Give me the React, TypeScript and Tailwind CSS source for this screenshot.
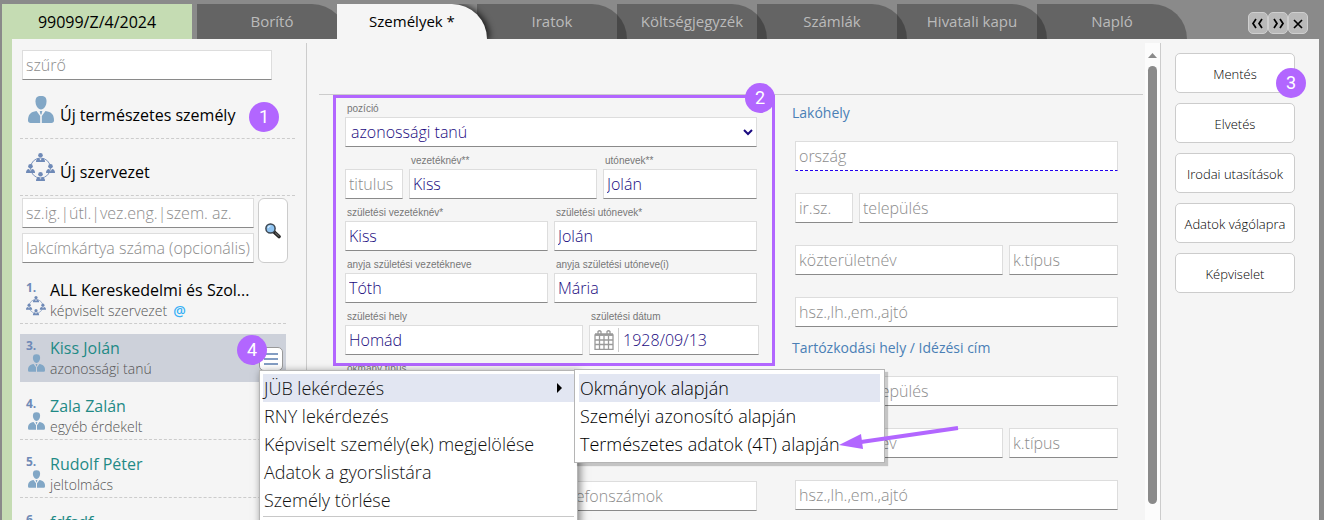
import type { ReactNode } from "react";

type Person = {
  no: string;
  name: string;
  role: string;
  kind: "person" | "org";
  own?: boolean;
  mail?: boolean;
  selected?: boolean;
};

type FieldProps = {
  id: string;
  label?: string;
  placeholder?: string;
  value?: string;
  required?: boolean;
};

const tabs = ["Borító", "Személyek *", "Iratok", "Költségjegyzék", "Számlák", "Hivatali kapu", "Napló"];

const persons: Person[] = [
  { no: "1.", name: "ALL Kereskedelmi és Szol...", role: "képviselt szervezet", kind: "org", own: true, mail: true },
  { no: "3.", name: "Kiss Jolán", role: "azonossági tanú", kind: "person", selected: true },
  { no: "4.", name: "Zala Zalán", role: "egyéb érdekelt", kind: "person" },
  { no: "5.", name: "Rudolf Péter", role: "jeltolmács", kind: "person" },
  { no: "6.", name: "fdfsdf", role: "", kind: "person" },
];

const actions = ["Mentés", "Elvetés", "Irodai utasítások", "Adatok vágólapra", "Képviselet"];

const windowButtons = [
  { label: "Előző", d: "M7 6L4 10.500L7 15M13 6L10 10.500L13 15" },
  { label: "Következő", d: "M5 6L8 10.500L5 15M11 6L14 10.500L11 15" },
  { label: "Bezárás", d: "M5 7L13 15M13 7L5 15" },
];

const menuItems = ["RNY lekérdezés", "Képviselt személy(ek) megjelölése", "Adatok a gyorslistára", "Személy törlése"];

const submenuItems = ["Okmányok alapján", "Személyi azonosító alapján", "Természetes adatok (4T) alapján"];

const inputClass =
  "block h-[30px] w-full min-w-0 border border-[#dddddd] border-b-[#8a8a8a] bg-white px-[3px] text-base font-light text-[#1a0a80] outline-none placeholder:text-[#8c8c8c] placeholder:opacity-100";

const labelClass =
  "block h-[22px] truncate pl-0.5 pt-2 font-['Liberation_Sans',Arial,sans-serif] text-[10px] leading-3 text-[#777777]";

const PersonIcon = ({ className }: { className: string }) => (
  <svg viewBox="0 0 26 27" className={className} fill="#82a7c6">
    <path d="M13 0C17 0 18.500 1.500 18.500 5.500C18.500 9.500 16 13.500 13 13.500C10 13.500 7.500 9.500 7.500 5.500C7.500 1.500 9 0 13 0Z" />
    <path d="M8.500 15L12.200 20V27H2.500C1 27 0 26 0 24.500C0 18.500 2.500 16 8.500 15Z" />
    <path d="M17.500 15L13.800 20V27H23.500C25 27 26 26 26 24.500C26 18.500 23.500 16 17.500 15Z" />
    <path d="M11.700 15H14.300L13.500 18.500H12.500Z" />
  </svg>
);

const Figure = ({ x, y }: { x: number; y: number }) => (
  <g transform={`translate(${x} ${y})`}>
    <circle cx="4.500" cy="2.300" r="2.300" />
    <path d="M0 9C0 6.500 1 5.200 3 5L4.500 7.500L6 5C8 5.200 9 6.500 9 9Z" />
  </g>
);

const OrgIcon = ({ className }: { className: string }) => (
  <svg viewBox="0 0 29 29" className={className} fill="#6f8ab7">
    <circle cx="14.500" cy="15" r="10" fill="none" stroke="#7f97bf" strokeWidth="1" />
    <Figure x={10} y={0} />
    <Figure x={0} y={11} />
    <Figure x={20} y={11} />
    <Figure x={10} y={19} />
  </svg>
);

const CalendarIcon = () => (
  <svg viewBox="0 0 20 20" className="h-5 w-5 shrink-0" fill="none" stroke="#9a9a9a" strokeWidth="1.300">
    <path d="M1 5V19.300H19V5Z" />
    <path d="M1 4.500H19" strokeWidth="2.500" />
    <path d="M5.500 5V8.500V19M10 6V19M14.500 6V19M1 10H19M1 14.500H19" />
    <path d="M4 5V1.500Q5.500 0 7 1.500V5M13 5V1.500Q14.500 0 16 1.500V5" />
  </svg>
);

const MagnifierIcon = () => (
  <svg viewBox="0 0 16 16" className="h-4 w-4">
    <path d="M8.500 8.500L14 13.500" stroke="#222222" strokeWidth="3.600" strokeLinecap="round" />
    <path d="M10.500 10L13.800 13" stroke="#5a5a5a" strokeWidth="1.500" strokeLinecap="round" />
    <circle cx="5.500" cy="5.500" r="4.600" fill="#8fc4f2" stroke="#3c4650" strokeWidth="1.500" />
    <path d="M3 5Q3.500 3 5.500 3" stroke="#d6ecff" strokeWidth="1.200" fill="none" />
  </svg>
);

const Marker = ({ children, className }: { children: ReactNode; className: string }) => (
  <span
    className={`absolute z-30 flex h-[30px] w-[30px] items-center justify-center rounded-full bg-[#b266ff] font-[Roboto,sans-serif] text-lg leading-none text-white ${className}`}
  >
    {children}
  </span>
);

const Field = ({ id, label, placeholder, value, required }: FieldProps) => (
  <div className="min-w-0">
    <label htmlFor={id} className={labelClass}>
      {label}
    </label>
    <input
      id={id}
      type="text"
      aria-label={label ?? placeholder}
      placeholder={placeholder}
      defaultValue={value}
      className={required ? `${inputClass} border-b-[#2200ee] [border-bottom-style:dashed]` : inputClass}
    />
  </div>
);

const AddressFields = ({ prefix, country }: { prefix: string; country?: boolean }) => (
  <>
    {country && <Field id={`${prefix}-country`} placeholder="ország" required />}
    <div className="grid grid-cols-[58px_1fr] gap-1.5">
      <Field id={`${prefix}-zip`} placeholder="ir.sz." />
      <Field id={`${prefix}-city`} placeholder="település" />
    </div>
    <div className="grid grid-cols-[208fr_109fr] gap-1.5">
      <Field id={`${prefix}-street`} placeholder="közterületnév" />
      <Field id={`${prefix}-type`} placeholder="k.típus" />
    </div>
    <Field id={`${prefix}-house`} placeholder="hsz.,lh.,em.,ajtó" />
  </>
);

const TabBar = () => (
  <header className="flex h-[39px] items-end pl-0.5 pr-4">
    <div className="mr-[5px] flex h-[35px] w-[190px] shrink-0 items-center justify-center bg-[#c5dcb3] text-base text-black">
      99099/Z/4/2024
    </div>
    <nav className="flex">
      {tabs.map((tab, i) => (
        <button
          key={tab}
          type="button"
          className={
            i === 1
              ? "relative z-10 -mr-2.5 h-[35px] w-[150px] rounded-tr-[35px] bg-[#f5f5f5] text-[15px] text-black shadow-[3px_0_6px_#000000b0] [clip-path:inset(0_-12px_0_0)]"
              : "-mr-2.5 h-[35px] w-[150px] rounded-tr-[35px] bg-[#00000046] text-[15px] text-[#bbbbbb]"
          }
        >
          {tab}
        </button>
      ))}
    </nav>
    <div className="mb-[5px] ml-auto flex">
      {windowButtons.map(({ label, d }) => (
        <button
          key={label}
          type="button"
          aria-label={label}
          className="flex h-[22px] w-5 items-center justify-center rounded-[5px] border border-[#cfcfcf] bg-[#b9b9b9]"
        >
          <svg viewBox="0 0 18 20" className="h-5 w-[18px]" fill="none" stroke="#000000" strokeWidth="1.700">
            <path d={d} />
          </svg>
        </button>
      ))}
    </div>
  </header>
);

const ContextMenu = () => (
  <div
    role="menu"
    className="absolute left-[239px] top-[36px] z-20 w-[319px] border border-[#b5b5b5] bg-white p-[3px] text-lg font-light leading-7 text-[#111111] shadow-[2px_2px_8px_#00000080]"
  >
    <button type="button" role="menuitem" className="flex h-7 w-full items-center justify-between bg-[#e2e6f2] pl-px pr-3">
      JÜB lekérdezés
      <svg viewBox="0 0 5 10" className="h-2.5 w-[5px]">
        <path d="M0 0L5 5L0 10Z" />
      </svg>
    </button>
    {menuItems.map((item) => (
      <button key={item} type="button" role="menuitem" className="block h-7 w-full pl-px text-left">
        {item}
      </button>
    ))}
    <hr className="mb-4 mt-0.5 border-[#c8c8c8]" />
    <div
      role="menu"
      className="absolute -top-0.5 left-[314px] w-[311px] border border-[#b5b5b5] bg-white p-1 text-black shadow-[3px_3px_1px_#00000033]"
    >
      {submenuItems.map((item, i) => (
        <button
          key={item}
          type="button"
          role="menuitem"
          className={i === 0 ? "block h-7 w-full bg-[#e2e6f2] pl-px text-left" : "block h-7 w-full pl-px text-left"}
        >
          {item}
        </button>
      ))}
      <svg viewBox="0 0 120 30" className="absolute left-[264px] top-[55px] h-[30px] w-[120px]">
        <path d="M119 3L22 17" stroke="#b266ff" strokeWidth="4" />
        <path d="M0 20L22 9L24 24Z" fill="#b266ff" />
      </svg>
    </div>
  </div>
);

const PersonRow = ({ no, name, role, kind, own, mail, selected }: Person) => (
  <li
    className={
      selected
        ? "relative mt-2.5 flex h-12 bg-[#cdd1da] pl-1.5"
        : "mt-2.5 flex h-12 border-b border-dashed border-[#cccccc] pl-1.5"
    }
  >
    <div className="w-6 shrink-0 pt-1">
      <div className="text-xs font-bold leading-4 text-[#6f8ab7]">{no}</div>
      {kind === "org" ? <OrgIcon className="h-5 w-5" /> : <PersonIcon className="ml-0.5 h-[18px] w-[17px]" />}
    </div>
    <div className="min-w-0 pt-1">
      <div className={own ? "text-base leading-5 text-black" : "text-base leading-5 text-[#1f8a86]"}>{name}</div>
      <div className="text-sm font-light leading-[22px] text-[#555555]">
        {role}
        {mail && <span className="ml-1.5 font-semibold text-[#35b0f5]">@</span>}
      </div>
    </div>
    {selected && (
      <>
        <button
          type="button"
          aria-label="Műveletek"
          className="absolute right-[3px] top-[13px] flex h-6 w-6 items-center justify-center rounded-[5px] border border-[#999999] bg-white"
        >
          <svg viewBox="0 0 16 16" className="h-4 w-4" stroke="#5b7db0" strokeWidth="1.500">
            <path d="M1 3H15M1 8H15M1 13H15" />
          </svg>
        </button>
        <Marker className="right-[19px] top-px">4</Marker>
        <ContextMenu />
      </>
    )}
  </li>
);

const Sidebar = () => (
  <aside className="relative z-20 mt-1 w-[295px] shrink-0 border-r border-[#cccccc] pl-2 pr-[11px]">
    <div className="pl-0.5 pt-[7px]">
      <input type="search" aria-label="szűrő" placeholder="szűrő" className={`${inputClass} max-w-[250px]`} />
    </div>
    <button
      type="button"
      className="relative flex h-[59px] w-full items-center border-b border-dashed border-[#cccccc] pl-2 text-left text-base text-black"
    >
      <PersonIcon className="h-[27px] w-[26px]" />
      <span className="ml-1.5 pt-3">Új természetes személy</span>
      <Marker className="right-4 top-[22px]">1</Marker>
    </button>
    <button
      type="button"
      className="flex h-[57px] w-full items-center border-b border-dashed border-[#cccccc] pl-1.5 text-left text-base text-black"
    >
      <OrgIcon className="h-[29px] w-[29px]" />
      <span className="ml-[5px] pt-2.5">Új szervezet</span>
    </button>
    <form className="mr-[7px] flex gap-1 pl-0.5 pt-0.5">
      <div className="flex flex-1 flex-col gap-[5px]">
        <input type="text" aria-label="igazolvány száma" placeholder="sz.ig.|útl.|vez.eng.|szem. az." className={inputClass} />
        <input type="text" aria-label="lakcímkártya száma" placeholder="lakcímkártya száma (opcionális)" className={inputClass} />
      </div>
      <button
        type="button"
        aria-label="Keresés"
        className="flex w-[30px] items-center justify-center rounded-md border border-[#cccccc] bg-white"
      >
        <MagnifierIcon />
      </button>
    </form>
    <ul className="mr-[9px] pt-[3px]">
      {persons.map((person) => (
        <PersonRow key={person.no} {...person} />
      ))}
    </ul>
  </aside>
);

const PersonForm = () => (
  <main className="mt-1 min-w-0 flex-1 pl-3 pr-0.5">
    <div className="h-[52px] border-b border-[#cccccc]" />
    <form className="grid grid-cols-[412fr_323fr] gap-x-[38px] pl-[26px] pr-[25px]">
      <div className="min-w-0">
        <div className="relative">
          <label htmlFor="position" className={labelClass}>
            pozíció
          </label>
          <div className="relative">
            <select id="position" className={`${inputClass} appearance-none pl-[5px]`}>
              <option>azonossági tanú</option>
            </select>
            <svg viewBox="0 0 10 7" className="pointer-events-none absolute right-1 top-3 h-[7px] w-2.5" fill="none">
              <path d="M1 1L5 5L9 1" stroke="#1a0a80" strokeWidth="2" />
            </svg>
          </div>
          <div className="grid grid-cols-[58px_188fr_154fr] gap-1.5">
            <Field id="title" placeholder="titulus" />
            <Field id="last-name" label="vezetéknév**" value="Kiss" />
            <Field id="first-name" label="utónevek**" value="Jolán" />
          </div>
          <div className="grid grid-cols-2 gap-x-1.5">
            <Field id="birth-last-name" label="születési vezetéknév*" value="Kiss" />
            <Field id="birth-first-name" label="születési utónevek*" value="Jolán" />
            <Field id="mother-last-name" label="anyja születési vezetékneve" value="Tóth" />
            <Field id="mother-first-name" label="anyja születési utóneve(i)" value="Mária" />
          </div>
          <div className="-mr-0.5 grid grid-cols-[1fr_170px] gap-1.5">
            <Field id="birth-place" label="születési hely" value="Homád" />
            <div>
              <label htmlFor="birth-date" className={labelClass}>
                születési dátum
              </label>
              <div className="flex h-[30px] items-center border border-[#dddddd] border-b-[#8a8a8a] bg-white pl-1">
                <CalendarIcon />
                <input
                  id="birth-date"
                  type="text"
                  defaultValue="1928/09/13"
                  className="ml-1 h-6 w-full min-w-0 border-l border-[#cccccc] pl-1 text-base font-light text-[#1a0a80] outline-none"
                />
              </div>
            </div>
          </div>
          <div className="pointer-events-none absolute -bottom-[11px] -left-3 -right-[18px] top-0 border-[3px] border-[#b266ff]" />
          <Marker className="-right-[18px] -top-3">2</Marker>
        </div>
        <Field id="doc-type" label="okmány típus" />
        <Field id="doc-number" />
        <div className="grid grid-cols-2 gap-1.5">
          <Field id="email" />
          <Field id="phone" placeholder="telefonszámok" />
        </div>
      </div>
      <div className="min-w-0">
        <h2 className="-ml-[3px] h-6 pt-2 text-sm leading-5 text-[#4a7fb5]">Lakóhely</h2>
        <AddressFields prefix="home" country />
        <h2 className="-ml-[3px] h-[27px] pt-[11px] text-sm leading-5 text-[#4a7fb5]">Tartózkodási hely / Idézési cím</h2>
        <AddressFields prefix="stay" />
      </div>
    </form>
  </main>
);

const App = () => (
  <div className="flex h-screen flex-col overflow-hidden bg-[#8a8a8a] font-['Open_Sans','Noto_Sans',sans-serif]">
    <TabBar />
    <div className="ml-0.5 mr-[5px] flex min-h-0 flex-1 border-l-[10px] border-[#c5dcb3] bg-[#f5f5f5]">
      <Sidebar />
      <PersonForm />
      <div className="mt-1 flex w-[15px] shrink-0 flex-col items-center bg-[#fcfcfc] pt-2.5">
        <svg viewBox="0 0 9 5" className="h-[5px] w-[9px]" fill="#8a8a8a">
          <path d="M4.500 0L9 5H0Z" />
        </svg>
        <div className="mb-4 mt-2 w-[9px] flex-1 rounded-full bg-[#8a8a8a]" />
      </div>
      <aside className="relative mt-1 flex w-[159px] shrink-0 flex-col gap-2.5 border-l border-[#cccccc] pl-3.5 pr-6 pt-2.5">
        {actions.map((action) => (
          <button
            key={action}
            type="button"
            className="h-10 rounded-[5px] border border-[#cccccc] bg-white pt-1 text-[13px] font-light text-black"
          >
            {action}
          </button>
        ))}
        <Marker className="right-[13px] top-[25px]">3</Marker>
      </aside>
    </div>
  </div>
);

export default App;
